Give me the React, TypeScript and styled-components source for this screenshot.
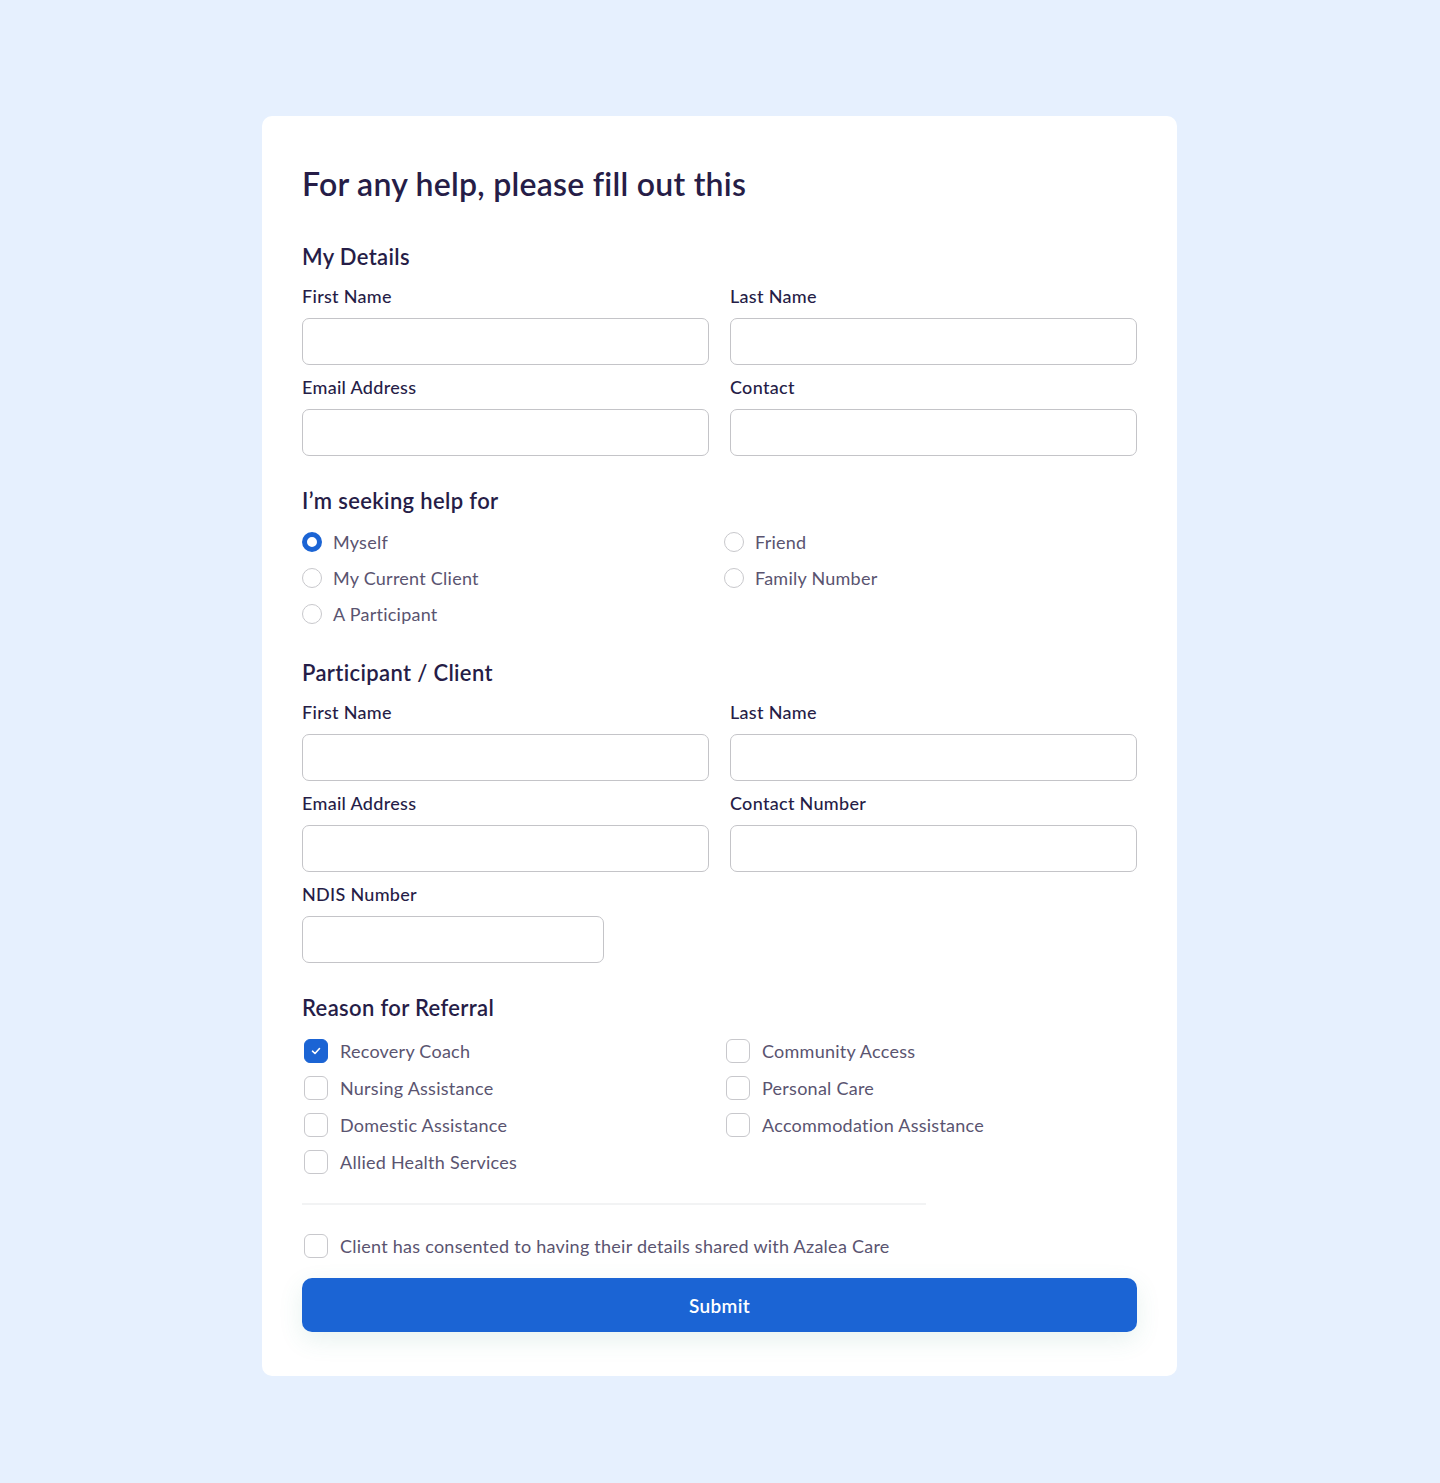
import React from "react";
import styled, { createGlobalStyle } from "styled-components";

const Global = createGlobalStyle`
  * { box-sizing: border-box; }
  html, body { margin: 0; padding: 0; }
  body {
    background: #e6f0fe;
    font-family: "Lato", "Liberation Sans", sans-serif;
    color: #251d45;
  }
`;

const Page = styled.div`
  min-height: 1483px;
  padding: 116px 0 108px 262px;
  display: flex;
  justify-content: flex-start;
  align-items: flex-start;
`;

const Card = styled.form`
  width: 915px;
  background: #ffffff;
  border-radius: 10px;
  padding: 46px 40px 44px;
  display: flex;
  flex-direction: column;
`;

const Title = styled.h1`
  margin: 0;
  font-size: 32px;
  line-height: 44px;
  font-weight: 600;
  color: #261d47;
  letter-spacing: 0.25px;
`;

const SectionTitle = styled.h2<{ $top: number }>`
  margin: ${(p) => p.$top}px 0 0;
  font-size: 22px;
  line-height: 28px;
  font-weight: 600;
  color: #261d47;
  letter-spacing: 0.35px;
`;

const FieldGrid = styled.div`
  margin-top: 15px;
  display: grid;
  grid-template-columns: 1fr 1fr;
  column-gap: 21px;
  row-gap: 12px;
`;

const Field = styled.label<{ $narrow?: boolean }>`
  display: flex;
  flex-direction: column;
  gap: 10px;
  width: ${(p) => (p.$narrow ? "302px" : "auto")};
`;

const Label = styled.span`
  font-size: 18px;
  line-height: 21px;
  color: #261d47;
  font-weight: 500;
  letter-spacing: 0.3px;
`;

const Input = styled.input`
  height: 47px;
  width: 100%;
  margin-top: 1px;
  border: 1px solid #c4c4c8;
  border-radius: 7px;
  background: #fff;
  font-family: inherit;
  font-size: 16px;
  padding: 0 14px;
  outline: none;
`;

const OptionGrid = styled.div<{ $gap: number; $top: number }>`
  margin-top: ${(p) => p.$top}px;
  display: grid;
  grid-template-columns: 422px 1fr;
  row-gap: ${(p) => p.$gap}px;
`;

const Option = styled.label<{ $gap: number }>`
  display: flex;
  align-items: center;
  gap: ${(p) => p.$gap}px;
  font-size: 18px;
  line-height: 22px;
  letter-spacing: 0.25px;
  color: #5a5470;
  cursor: pointer;
`;

const Radio = styled.span<{ $on?: boolean }>`
  width: 20px;
  height: 20px;
  border-radius: 50%;
  flex: none;
  background: #fff;
  border: ${(p) => (p.$on ? "5.5px solid #1b64d4" : "1px solid #c8c8cc")};
`;

const Box = styled.span<{ $on?: boolean }>`
  width: 24px;
  height: 24px;
  border-radius: 6px;
  flex: none;
  margin-left: 2px;
  display: flex;
  align-items: center;
  justify-content: center;
  background: ${(p) => (p.$on ? "#1b64d4" : "#fff")};
  border: 1.5px solid ${(p) => (p.$on ? "#1b64d4" : "#c8c8cc")};
`;

const Divider = styled.hr`
  margin: 29px 0 0;
  width: 624px;
  border: none;
  border-top: 2px solid #f2f3f4;
`;

const Consent = styled.div`
  margin-top: 29px;
`;

const Submit = styled.button`
  margin-top: 20px;
  height: 54px;
  width: 100%;
  border: none;
  border-radius: 10px;
  background: #1b64d4;
  color: #fff;
  font-family: inherit;
  font-size: 19px;
  font-weight: 600;
  letter-spacing: 0.3px;
  box-shadow: 0 8px 24px rgba(60, 150, 120, 0.12);
  cursor: pointer;
`;

const Check = () => (
  <svg width="12" height="12" viewBox="0 0 12 12" fill="none">
    <path d="M2.5 6.2 L5 8.5 L9.5 3.5" stroke="#fff" strokeWidth="1.6" strokeLinecap="round" strokeLinejoin="round" />
  </svg>
);

const CheckOption = ({ label, on }: { label: string; on?: boolean }) => (
  <Option $gap={12}>
    <Box $on={on}>{on && <Check />}</Box>
    {label}
  </Option>
);

const RadioOption = ({ label, on }: { label: string; on?: boolean }) => (
  <Option $gap={11}>
    <Radio $on={on} />
    {label}
  </Option>
);

const TextField = ({ label, narrow }: { label: string; narrow?: boolean }) => (
  <Field $narrow={narrow}>
    <Label>{label}</Label>
    <Input type="text" />
  </Field>
);

export default function App() {
  return (
    <>
      <Global />
      <Page>
        <Card onSubmit={(e) => e.preventDefault()}>
          <Title>For any help, please fill out this</Title>

          <SectionTitle $top={37}>My Details</SectionTitle>
          <FieldGrid>
            <TextField label="First Name" />
            <TextField label="Last Name" />
            <TextField label="Email Address" />
            <TextField label="Contact" />
          </FieldGrid>

          <SectionTitle $top={31}>I’m seeking help for</SectionTitle>
          <OptionGrid $gap={14} $top={16}>
            <RadioOption label="Myself" on />
            <RadioOption label="Friend" />
            <RadioOption label="My Current Client" />
            <RadioOption label="Family Number" />
            <RadioOption label="A Participant" />
          </OptionGrid>

          <SectionTitle $top={34}>Participant / Client</SectionTitle>
          <FieldGrid>
            <TextField label="First Name" />
            <TextField label="Last Name" />
            <TextField label="Email Address" />
            <TextField label="Contact Number" />
            <TextField label="NDIS Number" narrow />
          </FieldGrid>

          <SectionTitle $top={31}>Reason for Referral</SectionTitle>
          <OptionGrid $gap={13} $top={17}>
            <CheckOption label="Recovery Coach" on />
            <CheckOption label="Community Access" />
            <CheckOption label="Nursing Assistance" />
            <CheckOption label="Personal Care" />
            <CheckOption label="Domestic Assistance" />
            <CheckOption label="Accommodation Assistance" />
            <CheckOption label="Allied Health Services" />
          </OptionGrid>

          <Divider />
          <Consent>
            <CheckOption label="Client has consented to having their details shared with Azalea Care" />
          </Consent>
          <Submit type="submit">Submit</Submit>
        </Card>
      </Page>
    </>
  );
}
